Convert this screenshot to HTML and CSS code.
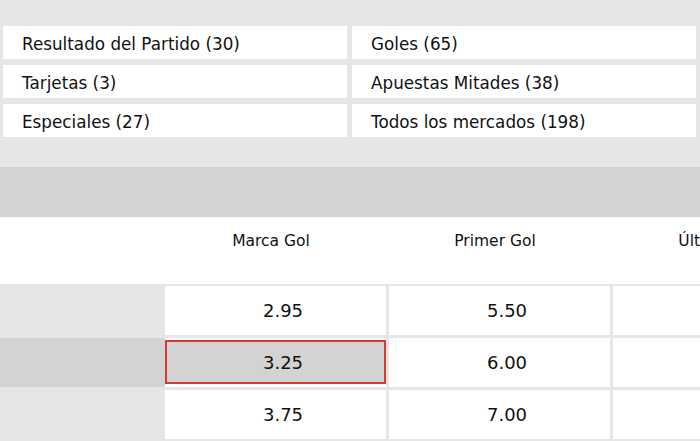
FILE: index.html
```html
<!DOCTYPE html>
<html lang="es">
<head>
<meta charset="utf-8">
<title>Mercados</title>
<link rel="stylesheet" href="styles.css">
</head>
<body>
<div class="page">
  <div class="markets">
    <div class="market">Resultado del Partido (30)</div>
    <div class="market">Goles (65)</div>
    <div class="market">Tarjetas (3)</div>
    <div class="market">Apuestas Mitades (38)</div>
    <div class="market">Especiales (27)</div>
    <div class="market">Todos los mercados (198)</div>
  </div>
  <div class="band"></div>
  <div class="table">
    <div class="head">
      <div class="label"></div>
      <div class="hcell">Marca Gol</div>
      <div class="hcell">Primer Gol</div>
      <div class="hcell">Último Gol</div>
    </div>
    <div class="rows">
      <div class="row">
        <div class="label"></div>
        <div class="cell"><span class="odd">2.95</span></div>
        <div class="cell"><span class="odd">5.50</span></div>
        <div class="cell"></div>
      </div>
      <div class="row row-active">
        <div class="label"></div>
        <div class="cell"><span class="odd odd-selected">3.25</span></div>
        <div class="cell"><span class="odd">6.00</span></div>
        <div class="cell"></div>
      </div>
      <div class="row">
        <div class="label"></div>
        <div class="cell"><span class="odd">3.75</span></div>
        <div class="cell"><span class="odd">7.00</span></div>
        <div class="cell"></div>
      </div>
      <div class="row">
        <div class="label"></div>
        <div class="cell"></div>
        <div class="cell"></div>
        <div class="cell"></div>
      </div>
    </div>
  </div>
</div>
</body>
</html>
```

FILE: styles.css
```css
html, body {
  margin: 0;
  padding: 0;
}
body {
  width: 700px;
  height: 441px;
  overflow: hidden;
  background: #e6e6e6;
  font-family: "DejaVu Sans", Verdana, sans-serif;
  color: #111111;
}
.page {
  width: 700px;
}
.markets {
  display: grid;
  grid-template-columns: 344px 344px;
  column-gap: 5px;
  row-gap: 6px;
  padding: 26px 4px 0 3px;
}
.market {
  height: 33px;
  box-sizing: border-box;
  background: #ffffff;
  display: flex;
  align-items: center;
  padding: 3px 0 0 19px;
  font-size: 16.8px;
  white-space: nowrap;
}
.band {
  margin-top: 30px;
  height: 50px;
  background: #d3d3d3;
}
.table {
  width: 700px;
  overflow: hidden;
}
.head {
  display: flex;
  height: 67px;
  background: #ffffff;
}
.label {
  flex: 0 0 165px;
}
.hcell {
  flex: 0 0 221px;
  box-sizing: border-box;
  margin-right: 3px;
  padding: 15px 9px 0 0;
  text-align: center;
  font-size: 15.5px;
  white-space: nowrap;
}
.rows {
  display: flex;
  flex-direction: column;
  row-gap: 3px;
  padding-top: 2px;
}
.row {
  display: flex;
  height: 49px;
}
.row-active .label {
  background: #d3d3d3;
}
.cell {
  flex: 0 0 221px;
  margin-right: 3px;
  background: #ffffff;
  display: flex;
}
.odd {
  flex: 1;
  display: flex;
  align-items: center;
  justify-content: center;
  padding-left: 15px;
  font-size: 18px;
}
.odd-selected {
  margin: 2px 0 3px;
  border: 2px solid #d63a2f;
  background: #d3d3d3;
}
```
